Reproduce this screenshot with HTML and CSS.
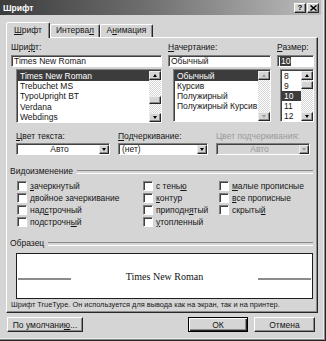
FILE: index.html
```html
<!DOCTYPE html>
<html lang="ru">
<head>
    <meta charset="UTF-8">
    <meta name="viewport" content="width=device-width, initial-scale=1.0">
    <title>Шрифт</title>
    <link rel="stylesheet" href="styles.css">
</head>
<body>
    <div class="dialog">
        <div class="titlebar">
            <span class="title">Шрифт</span>
            <div class="caption-buttons">
                <span class="caption-btn">?</span>
                <span class="caption-btn">
                    <svg width="7" height="6" viewBox="0 0 7 6"><path d="M0.5 0.5L6.5 5.5M6.5 0.5L0.5 5.5" stroke="#000" stroke-width="1.5"/></svg>
                </span>
            </div>
        </div>

        <div class="tabs">
            <div class="tab active"><u>Ш</u>рифт</div>
            <div class="tab">Интерва<u>л</u></div>
            <div class="tab">А<u>н</u>имация</div>
        </div>

        <div class="panel">
            <div class="pickers">
                <div class="picker">
                    <div class="label">Шри<u>ф</u>т:</div>
                    <div class="field">Times New Roman</div>
                    <div class="listbox list-font">
                        <ul>
                            <li class="selected">Times New Roman</li>
                            <li>Trebuchet MS</li>
                            <li>TypoUpright BT</li>
                            <li>Verdana</li>
                            <li>Webdings</li>
                        </ul>
                        <div class="scrollbar">
                            <span class="arrow up"></span>
                            <span class="track"><span class="thumb" style="margin-top: 16px"></span></span>
                            <span class="arrow down"></span>
                        </div>
                    </div>
                </div>
                <div class="picker">
                    <div class="label"><u>Н</u>ачертание:</div>
                    <div class="field">Обычный</div>
                    <div class="listbox list-style">
                        <ul>
                            <li class="selected">Обычный</li>
                            <li>Курсив</li>
                            <li>Полужирный</li>
                            <li>Полужирный Курсив</li>
                        </ul>
                        <div class="scrollbar disabled">
                            <span class="arrow up"></span>
                            <span class="track"></span>
                            <span class="arrow down"></span>
                        </div>
                    </div>
                </div>
                <div class="picker">
                    <div class="label"><u>Р</u>азмер:</div>
                    <div class="field"><span class="field-selected">10</span></div>
                    <div class="listbox list-size">
                        <ul>
                            <li>8</li>
                            <li>9</li>
                            <li class="selected">10</li>
                            <li>11</li>
                            <li>12</li>
                        </ul>
                        <div class="scrollbar">
                            <span class="arrow up"></span>
                            <span class="track"><span class="thumb" style="margin-top: 1px"></span></span>
                            <span class="arrow down"></span>
                        </div>
                    </div>
                </div>
            </div>

            <div class="colors">
                <div class="combo combo-wide">
                    <div class="label"><u>Ц</u>вет текста:</div>
                    <div class="dropdown">
                        <span class="value centered">Авто</span>
                        <span class="drop-btn"></span>
                    </div>
                </div>
                <div class="combo combo-narrow">
                    <div class="label"><u>П</u>одчеркивание:</div>
                    <div class="dropdown">
                        <span class="value">(нет)</span>
                        <span class="drop-btn"></span>
                    </div>
                </div>
                <div class="combo combo-wide disabled">
                    <div class="label">Цвет подчеркивания:</div>
                    <div class="dropdown">
                        <span class="value centered">Авто</span>
                        <span class="drop-btn"></span>
                    </div>
                </div>
            </div>

            <div class="group group-effects">
                <div class="group-title">Видоизменение</div>
                <div class="checks">
                    <div class="check"><span class="box"></span><span><u>з</u>ачеркнутый</span></div>
                    <div class="check"><span class="box"></span><span><u>д</u>войное зачеркивание</span></div>
                    <div class="check"><span class="box"></span><span>над<u>с</u>трочный</span></div>
                    <div class="check"><span class="box"></span><span>подстрочн<u>ы</u>й</span></div>
                    <div class="check"><span class="box"></span><span>с тень<u>ю</u></span></div>
                    <div class="check"><span class="box"></span><span><u>к</u>онтур</span></div>
                    <div class="check"><span class="box"></span><span>приподн<u>я</u>тый</span></div>
                    <div class="check"><span class="box"></span><span><u>у</u>топленный</span></div>
                    <div class="check"><span class="box"></span><span><u>м</u>алые прописные</span></div>
                    <div class="check"><span class="box"></span><span><u>в</u>се прописные</span></div>
                    <div class="check"><span class="box"></span><span>скрыты<u>й</u></span></div>
                </div>
            </div>

            <div class="group group-sample">
                <div class="group-title">Образец</div>
                <div class="sample">
                    <span class="sample-line"></span>
                    <span class="sample-text">Times New Roman</span>
                    <span class="sample-line"></span>
                </div>
            </div>

            <p class="note">Шрифт TrueType. Он используется для вывода как на экран, так и на принтер.</p>
        </div>

        <div class="footer">
            <button class="btn btn-default-font">По умолчани<u>ю</u>...</button>
            <button class="btn btn-ok">ОК</button>
            <button class="btn btn-cancel">Отмена</button>
        </div>
    </div>
</body>
</html>
```

FILE: styles.css
```css
* {
    box-sizing: border-box;
}

body {
    margin: 0;
    font-family: "Liberation Sans", Arial, sans-serif;
    font-size: 8.5px;
    color: #161616;
    background-color: #d5d5d5;
}

u {
    text-decoration: underline;
    text-underline-offset: 1px;
}

.dialog {
    width: 326px;
    height: 341px;
    padding-right: 5px;
    display: flex;
    flex-direction: column;
    background-color: #d5d5d5;
    box-shadow: inset -1px -1px #262626, inset -2px -2px #8a8a8a, inset -3px -3px #ececec;
}

/* title bar */
.titlebar {
    height: 15px;
    display: flex;
    align-items: center;
    justify-content: space-between;
    padding: 0 2px 0 3px;
    background: linear-gradient(to right, #3c3c3c, #6e6e6e 45%, #bdbdbd);
}

.title {
    color: #fff;
    font-weight: bold;
    font-size: 8.5px;
}

.caption-buttons {
    display: flex;
    gap: 1px;
}

.caption-btn {
    width: 12px;
    height: 10px;
    display: flex;
    align-items: center;
    justify-content: center;
    font-weight: bold;
    font-size: 8px;
    color: #000;
    background-color: #d5d5d5;
    border: 1px solid;
    border-color: #fff #262626 #262626 #fff;
    box-shadow: inset -1px -1px #8a8a8a;
}

/* tabs */
.tabs {
    height: 15px;
    margin-top: 7px;
    padding-left: 6px;
    display: flex;
    align-items: flex-end;
}

.tab {
    height: 13px;
    line-height: 11px;
    text-align: center;
    background-color: #d5d5d5;
    border: 1px solid;
    border-bottom: none;
    border-color: #fff #262626 #fff #fff;
    border-radius: 2px 2px 0 0;
    box-shadow: inset -1px 0 #8a8a8a;
}

.tab:nth-child(1) { width: 44px; }
.tab:nth-child(2) { width: 50px; }
.tab:nth-child(3) { width: 53px; }

.tab.active {
    height: 16px;
    margin-bottom: -1px;
    line-height: 14px;
    position: relative;
    z-index: 1;
}

/* panel */
.panel {
    width: 312px;
    height: 276px;
    margin-left: 6px;
    padding: 4px 4px 0 4px;
    border: 1px solid;
    border-color: #fff #262626 #262626 #fff;
    box-shadow: inset -1px -1px #8a8a8a;
}

.label {
    height: 11px;
    line-height: 11px;
    white-space: nowrap;
}

.pickers {
    display: grid;
    grid-template-columns: 151px 103px 37px;
    column-gap: 6px;
}

.field {
    height: 12px;
    margin-top: 2px;
    padding-left: 2px;
    line-height: 10px;
    background-color: #fff;
    border: 1px solid;
    border-color: #808080 #fff #fff #808080;
    box-shadow: inset 1px 1px #404040;
    white-space: nowrap;
    overflow: hidden;
}

.field-selected {
    background-color: #3c3c3c;
    color: #fff;
    padding: 0 1px;
}

.listbox {
    height: 54px;
    margin-top: 2px;
    margin-left: 5px;
    display: flex;
    background-color: #fff;
    border: 1px solid;
    border-color: #808080 #fff #fff #808080;
    box-shadow: inset 1px 1px #404040;
    padding: 1px 0 0 1px;
}

.list-style,
.list-size {
    height: 53px;
}

.list-size {
    margin-left: 3px;
}

.listbox ul {
    flex: 1;
    margin: 0;
    padding: 0;
    list-style: none;
    overflow: hidden;
}

.listbox li {
    height: 10.2px;
    line-height: 10.2px;
    padding-left: 2px;
    white-space: nowrap;
}

.list-style li,
.list-size li {
    height: 10px;
    line-height: 10px;
}

.listbox li.selected {
    background-color: #3c3c3c;
    color: #fff;
}

.scrollbar {
    width: 12px;
    display: flex;
    flex-direction: column;
}

.arrow,
.thumb {
    display: flex;
    align-items: center;
    justify-content: center;
    background-color: #d5d5d5;
    border: 1px solid;
    border-color: #ececec #262626 #262626 #ececec;
    box-shadow: inset -1px -1px #8a8a8a;
}

.arrow {
    height: 9px;
    flex-shrink: 0;
}

.arrow::after {
    content: "";
    border-left: 2.5px solid transparent;
    border-right: 2.5px solid transparent;
}

.arrow.up::after {
    border-bottom: 3px solid #000;
}

.arrow.down::after {
    border-top: 3px solid #000;
}

.scrollbar.disabled .arrow.up::after {
    border-bottom-color: #9a9a9a;
}

.scrollbar.disabled .arrow.down::after {
    border-top-color: #9a9a9a;
}

.track {
    flex: 1;
    display: flex;
    flex-direction: column;
    background-color: #ececec;
    background-image: repeating-conic-gradient(#fff 0 25%, #d5d5d5 0 50%);
    background-size: 2px 2px;
}

.thumb {
    height: 8px;
}

/* colour row */
.colors {
    margin-top: 8px;
    padding-left: 5px;
    display: flex;
    gap: 8px;
}

.combo-wide { width: 94px; }
.combo-narrow { width: 90px; }

.dropdown {
    height: 12px;
    margin-top: 1px;
    display: flex;
    background-color: #fff;
    border: 1px solid;
    border-color: #808080 #fff #fff #808080;
    box-shadow: inset 1px 1px #404040;
    padding: 1px 0 0 1px;
}

.dropdown .value {
    flex: 1;
    line-height: 9px;
    padding-left: 2px;
}

.dropdown .value.centered {
    text-align: center;
}

.drop-btn {
    width: 10px;
    display: flex;
    align-items: center;
    justify-content: center;
    background-color: #d5d5d5;
    border: 1px solid;
    border-color: #ececec #262626 #262626 #ececec;
    box-shadow: inset -1px -1px #8a8a8a;
}

.drop-btn::after {
    content: "";
    border-left: 2.5px solid transparent;
    border-right: 2.5px solid transparent;
    border-top: 3px solid #000;
}

.combo.disabled .label {
    color: #9a9a9a;
}

.combo.disabled .dropdown {
    background-color: #d5d5d5;
}

.combo.disabled .value {
    color: #9a9a9a;
}

.combo.disabled .drop-btn::after {
    border-top-color: #9a9a9a;
}

/* groups */
.group-effects {
    margin-top: 11px;
}

.group-sample {
    margin-top: 10px;
}

.group-title {
    height: 11px;
    line-height: 11px;
    display: flex;
    align-items: center;
    margin-left: -1px;
}

.group-title::after {
    content: "";
    flex: 1;
    height: 2px;
    margin-left: 4px;
    border-top: 1px solid #8a8a8a;
    border-bottom: 1px solid #fff;
}

.checks {
    margin-top: 3px;
    padding-left: 6px;
    display: grid;
    grid-template-columns: 126px 76px 1fr;
    grid-template-rows: repeat(4, 12px);
    grid-auto-flow: column;
}

.check {
    display: flex;
    align-items: center;
    white-space: nowrap;
}

.box {
    width: 10px;
    height: 10px;
    margin-right: 3px;
    flex-shrink: 0;
    background-color: #fff;
    border: 1px solid;
    border-color: #808080 #fff #fff #808080;
    box-shadow: inset 1px 1px #404040;
}

.sample {
    height: 46px;
    margin-top: 4px;
    margin-left: 5px;
    padding: 0 1px;
    display: flex;
    align-items: center;
    background-color: #fff;
    border: 1px solid #1e1e1e;
}

.sample-line {
    width: 53px;
    height: 2px;
    margin-top: 6px;
    background-color: #8c8c8c;
}

.sample-text {
    flex: 1;
    text-align: center;
    font-family: "Liberation Serif", "Times New Roman", serif;
    font-size: 10px;
    color: #111;
}

.note {
    margin: 1px 0 0 0;
    line-height: 10px;
    font-size: 7.4px;
    white-space: nowrap;
}

/* buttons */
.footer {
    margin-top: 4px;
    padding: 0 6px 0 7px;
    display: flex;
    gap: 6px;
}

.btn {
    height: 15px;
    padding: 0;
    font-family: inherit;
    font-size: 8.5px;
    color: #161616;
    background-color: #d5d5d5;
    border: 1px solid;
    border-color: #fff #262626 #262626 #fff;
    box-shadow: inset -1px -1px #8a8a8a;
}

.btn-default-font {
    width: 76px;
    margin-right: auto;
}

.btn-ok {
    width: 60px;
    border-color: #000;
    box-shadow: inset 1px 1px #fff, inset -1px -1px #262626, inset -2px -2px #8a8a8a;
}

.btn-cancel {
    width: 61px;
}
```
